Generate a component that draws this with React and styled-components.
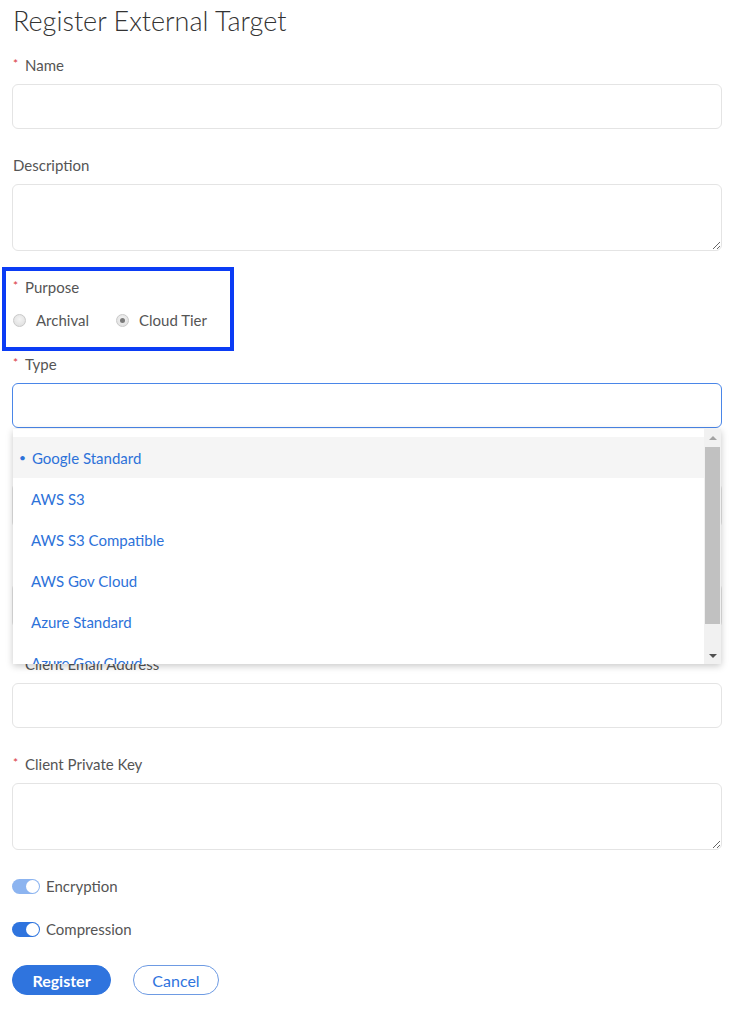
import React from "react";
import styled, { createGlobalStyle } from "styled-components";

const Global = createGlobalStyle`
  html, body { margin: 0; padding: 0; background: #fff; }
  body { font-family: "Lato", "Open Sans", sans-serif; color: #555; }
  * { box-sizing: border-box; }
`;

const Page = styled.div`
  width: 755px;
  padding: 0 0 0 12px;
`;

const Title = styled.h1`
  margin: 3px 0 16px 1px;
  font-size: 27px;
  line-height: 36px;
  font-weight: 300;
  color: #333;
`;

const Form = styled.form`
  width: 710px;
  display: flex;
  flex-direction: column;
`;

const Field = styled.div`
  position: relative;
  display: flex;
  flex-direction: column;
  margin-bottom: ${(p) => p.$gap ?? 26}px;
`;

const Label = styled.label`
  display: flex;
  align-items: center;
  height: 20px;
  margin-bottom: 9px;
  font-size: 15px;
  color: #555;
  padding-left: ${(p) => (p.$required ? 0 : 1)}px;
`;

const Star = styled.span`
  color: #d9363e;
  font-size: 12px;
  width: 13px;
  padding-left: 1px;
  align-self: flex-start;
  margin-top: 1px;
`;

const Input = styled.input`
  height: 45px;
  width: 100%;
  border: 1px solid ${(p) => (p.$focused ? "#4a86e8" : "#e4e4e4")};
  border-radius: 6px;
  background: #fff;
  outline: none;
  font: inherit;
`;

const TextArea = styled.textarea`
  height: 67px;
  width: 100%;
  border: 1px solid #e4e4e4;
  border-radius: 6px;
  resize: vertical;
  outline: none;
  font: inherit;
  display: block;
`;

const Highlight = styled.div`
  width: 212px;
  margin-bottom: 13px;
  padding-bottom: 11px;
  outline: 4px solid #0b3cf5;
  outline-offset: 6px;
`;

const RadioRow = styled.div`
  display: flex;
  align-items: center;
  height: 20px;
  margin-top: 13px;
  gap: 26px;
`;

const RadioOption = styled.span`
  display: flex;
  align-items: center;
  font-size: 15px;
  color: #555;
  gap: 10px;
  padding-left: 1px;
`;

const RadioDot = styled.span`
  width: 13px;
  height: 13px;
  border-radius: 50%;
  border: 1px solid #c9c9c9;
  background: radial-gradient(circle at 50% 40%, #f4f4f4, #dcdcdc);
  display: flex;
  align-items: center;
  justify-content: center;
  &::after {
    content: "";
    width: 5px;
    height: 5px;
    border-radius: 50%;
    background: ${(p) => (p.$checked ? "#7a7a7a" : "transparent")};
  }
`;

const Menu = styled.div`
  position: absolute;
  top: 75px;
  left: 1px;
  right: 1px;
  height: 235px;
  background: #fff;
  box-shadow: 0 2px 7px rgba(0, 0, 0, 0.22);
  display: flex;
  overflow: hidden;
  z-index: 5;
`;

const MenuList = styled.ul`
  flex: 1;
  list-style: none;
  margin: 0;
  padding: 8px 0;
`;

const MenuItem = styled.li`
  height: 41px;
  display: flex;
  align-items: center;
  padding-left: ${(p) => (p.$active ? 6 : 18)}px;
  font-size: 15px;
  color: #2d72d9;
  background: ${(p) => (p.$active ? "#f5f5f5" : "transparent")};
  gap: 6px;
  &::before {
    content: ${(p) => (p.$active ? '"•"' : "none")};
    font-size: 12px;
  }
`;

const ScrollBar = styled.div`
  width: 17px;
  background: #f1f1f1;
  display: flex;
  flex-direction: column;
  align-items: center;
`;

const Arrow = styled.div`
  height: 17px;
  width: 17px;
  display: flex;
  align-items: center;
  justify-content: center;
  &::after {
    content: "";
    border-left: 4px solid transparent;
    border-right: 4px solid transparent;
    ${(p) =>
      p.$down
        ? "border-top: 4px solid #505050;"
        : "border-bottom: 4px solid #a3a3a3;"}
  }
`;

const Thumb = styled.div`
  width: 15px;
  height: 177px;
  margin-top: 1px;
  background: #c1c1c1;
`;

const Track = styled.div`
  flex: 1;
`;

const ToggleRow = styled.div`
  display: flex;
  align-items: center;
  height: 20px;
  gap: 6px;
  font-size: 15px;
  color: #555;
  margin-bottom: ${(p) => p.$gap}px;
`;

const Switch = styled.span`
  width: 28px;
  height: 15px;
  border-radius: 8px;
  background: ${(p) => (p.$muted ? "#8cb4f0" : "#2f74de")};
  display: flex;
  align-items: center;
  justify-content: flex-end;
  padding-right: 1px;
  &::after {
    content: "";
    width: 13px;
    height: 13px;
    border-radius: 50%;
    background: #fff;
  }
`;

const Actions = styled.div`
  display: flex;
  gap: 22px;
`;

const Button = styled.button`
  height: 30px;
  width: ${(p) => p.$w}px;
  border-radius: 15px;
  font-family: inherit;
  font-size: 16px;
  font-weight: ${(p) => (p.$primary ? 700 : 400)};
  color: ${(p) => (p.$primary ? "#fff" : "#2f74de")};
  background: ${(p) => (p.$primary ? "#2f74de" : "#fff")};
  border: 1px solid ${(p) => (p.$primary ? "#2f74de" : "#6e9be3")};
  cursor: pointer;
`;

const FieldLabel = ({ required, children }) => (
  <Label $required={required}>
    {required && <Star>*</Star>}
    {children}
  </Label>
);

const types = [
  "Google Standard",
  "AWS S3",
  "AWS S3 Compatible",
  "AWS Gov Cloud",
  "Azure Standard",
  "Azure Gov Cloud",
];

export default function App() {
  return (
    <Page>
      <Global />
      <Title>Register External Target</Title>
      <Form onSubmit={(e) => e.preventDefault()}>
        <Field>
          <FieldLabel required>Name</FieldLabel>
          <Input />
        </Field>
        <Field>
          <FieldLabel>Description</FieldLabel>
          <TextArea />
        </Field>
        <Highlight>
          <FieldLabel required>Purpose</FieldLabel>
          <RadioRow>
            <RadioOption>
              <RadioDot />
              Archival
            </RadioOption>
            <RadioOption>
              <RadioDot $checked />
              Cloud Tier
            </RadioOption>
          </RadioRow>
        </Highlight>
        <Field>
          <FieldLabel required>Type</FieldLabel>
          <Input $focused />
          <Menu>
            <MenuList>
              {types.map((t, i) => (
                <MenuItem key={t} $active={i === 0}>
                  {t}
                </MenuItem>
              ))}
            </MenuList>
            <ScrollBar>
              <Arrow />
              <Thumb />
              <Track />
              <Arrow $down />
            </ScrollBar>
          </Menu>
        </Field>
        <Field>
          <FieldLabel required>Bucket Name</FieldLabel>
          <Input />
        </Field>
        <Field>
          <FieldLabel required>Client Project ID</FieldLabel>
          <Input />
        </Field>
        <Field>
          <FieldLabel required>Client Email Address</FieldLabel>
          <Input />
        </Field>
        <Field>
          <FieldLabel required>Client Private Key</FieldLabel>
          <TextArea />
        </Field>
        <ToggleRow $gap={23}>
          <Switch $muted />
          Encryption
        </ToggleRow>
        <ToggleRow $gap={26}>
          <Switch />
          Compression
        </ToggleRow>
        <Actions>
          <Button $primary $w={99}>Register</Button>
          <Button $w={86}>Cancel</Button>
        </Actions>
      </Form>
    </Page>
  );
}
